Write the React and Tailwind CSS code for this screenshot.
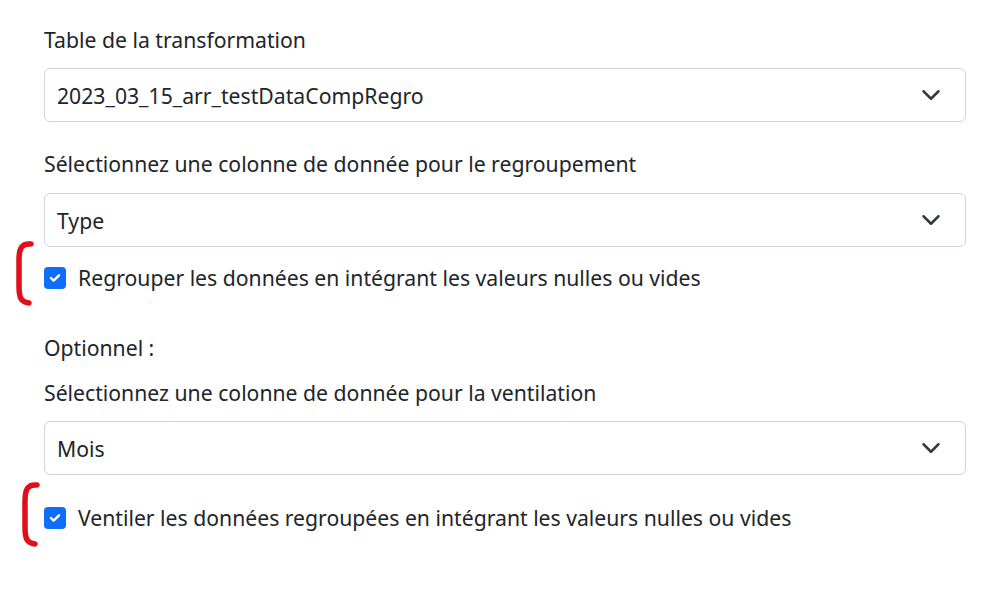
import React from "react";

function Chevron() {
  return (
    <svg width="20" height="20" viewBox="0 0 16 16" className="shrink-0">
      <path d="m2 5 6 6 6-6" fill="none" stroke="#343a40" strokeWidth="2" strokeLinecap="round" strokeLinejoin="round" />
    </svg>
  );
}

function Select({ value }) {
  return (
    <div className="flex h-[54px] items-center justify-between rounded-[6px] border border-[#ced4da] bg-white pl-[12px] pr-[24px]">
      <span className="pt-[2px]">{value}</span>
      <Chevron />
    </div>
  );
}

function Check({ label }) {
  return (
    <div className="flex h-[30px] items-center">
      <div className="flex h-[22px] w-[22px] shrink-0 items-center justify-center rounded-[4px] bg-[#0d6efd]">
        <svg width="18" height="18" viewBox="0 0 20 20">
          <path d="m5.5 10 3 3 6-6" fill="none" stroke="#fff" strokeWidth="2.6" strokeLinecap="round" strokeLinejoin="round" />
        </svg>
      </div>
      <span className="ml-[12px]">{label}</span>
    </div>
  );
}

function Bracket({ className }) {
  return (
    <svg className={className} width="26" height="68" viewBox="0 0 26 68">
      <path d="M20 5 C11 4 8 9 8 21 L8 47 C8 59 10 63 18 64" fill="none" stroke="#e0101a" strokeWidth="5.5" strokeLinecap="round" />
    </svg>
  );
}

export default function App() {
  return (
    <div
      className="relative h-[606px] w-[1008px] bg-white pl-[44px] pr-[42px] text-[21.2px] leading-[30px] text-[#212529]"
      style={{ fontFamily: '"Noto Sans", "Open Sans", sans-serif' }}
    >
      <div className="pt-[25px]">Table de la transformation</div>
      <div className="mt-[13px]">
        <Select value="2023_03_15_arr_testDataCompRegro" />
      </div>
      <div className="mt-[27px]">Sélectionnez une colonne de donnée pour le regroupement</div>
      <div className="mt-[14px]">
        <Select value="Type" />
      </div>
      <div className="mt-[16px]">
        <Check label="Regrouper les données en intégrant les valeurs nulles ou vides" />
      </div>
      <div className="mt-[40px]">Optionnel :</div>
      <div className="mt-[15px]">Sélectionnez une colonne de donnée pour la ventilation</div>
      <div className="mt-[13px]">
        <Select value="Mois" />
      </div>
      <div className="mt-[28px]">
        <Check label="Ventiler les données regroupées en intégrant les valeurs nulles ou vides" />
      </div>
      <Bracket className="absolute left-[11px] top-[239px]" />
      <Bracket className="absolute left-[17px] top-[480px]" />
    </div>
  );
}
